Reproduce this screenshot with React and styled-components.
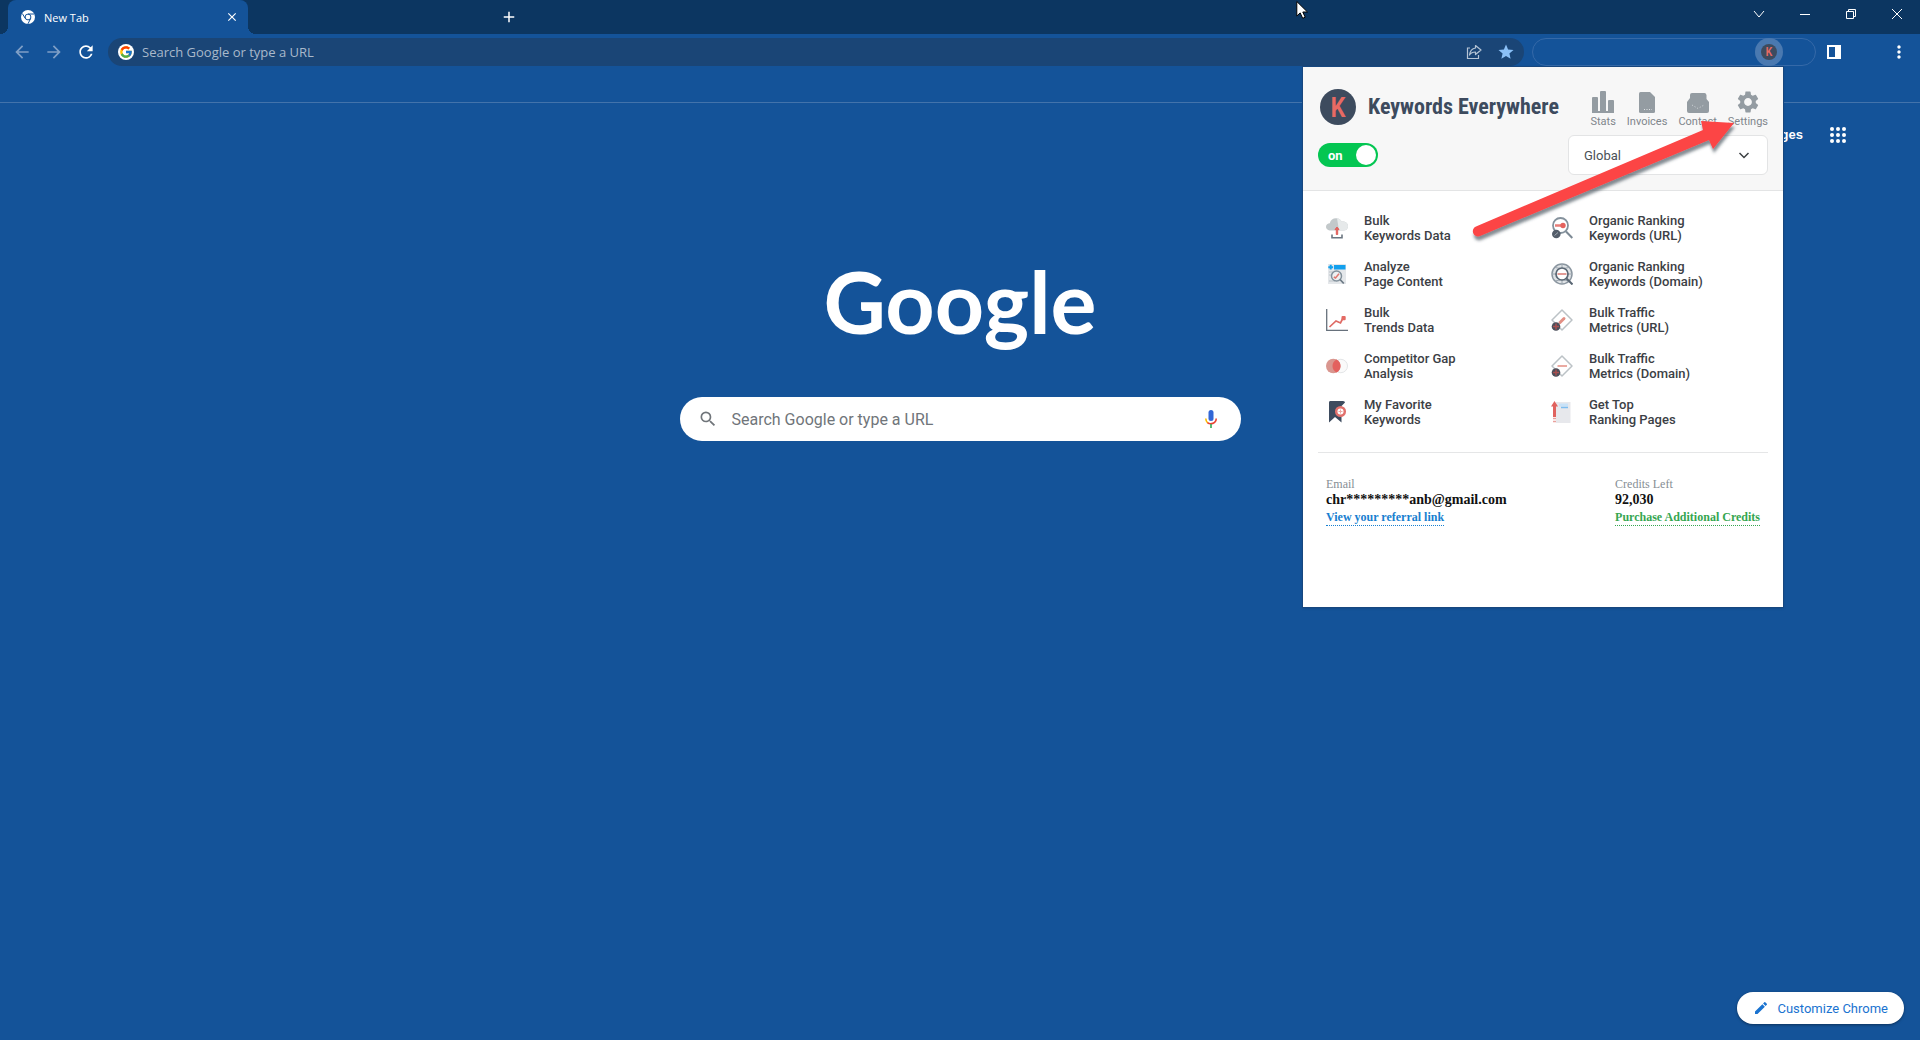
import styled, { createGlobalStyle, css } from "styled-components";
import { FcGoogle } from "react-icons/fc";
import {
  MdAdd,
  MdArrowBack,
  MdArrowForward,
  MdClose,
  MdEdit,
  MdMoreVert,
  MdRefresh,
  MdSearch,
  MdSettings,
  MdStar,
} from "react-icons/md";

const GlobalStyle = createGlobalStyle`
  * { box-sizing: border-box; }
  body {
    margin: 0;
    background: #145399;
    font-family: Roboto, "Liberation Sans", sans-serif;
  }
  button, input, select { font-family: inherit; }
`;

const uiFont = `"Open Sans", "Noto Sans", sans-serif`;

const Page = styled.div`
  position: relative;
  display: flex;
  flex-direction: column;
  min-height: 100vh;
  overflow: hidden;
  background: #145399;
`;

/* ---------- Browser frame ---------- */

const TabStrip = styled.header`
  display: flex;
  height: 34px;
  padding-left: 8px;
  background: #0c3661;
  color: #fff;
`;

const Tab = styled.div`
  position: relative;
  display: flex;
  align-items: center;
  gap: 9px;
  width: 240px;
  height: 34px;
  padding: 0 9px 0 13px;
  border-radius: 8px 8px 0 0;
  background: #145399;
  font-family: ${uiFont};
  font-size: 11px;

  &::before,
  &::after {
    content: "";
    position: absolute;
    bottom: 0;
    width: 8px;
    height: 8px;
  }
  &::before {
    left: -8px;
    background: radial-gradient(circle at 0 0, transparent 8px, #145399 8px);
  }
  &::after {
    right: -8px;
    background: radial-gradient(circle at 100% 0, transparent 8px, #145399 8px);
  }
`;

const TabTitle = styled.span`
  flex: 1;
`;

const IconButton = styled.button`
  display: inline-flex;
  align-items: center;
  justify-content: center;
  flex: none;
  width: ${({ $width }) => $width || 32}px;
  height: 28px;
  padding: 0;
  border: 0;
  background: transparent;
  color: ${({ $dim }) => ($dim ? "#7f9fc6" : "#fff")};
`;

const NewTabSlot = styled.div`
  display: flex;
  align-items: center;
  flex: 1;
  padding-left: 245px;
`;

const WindowControls = styled.div`
  display: flex;
  align-items: flex-start;
`;

const Toolbar = styled.div`
  display: flex;
  align-items: center;
  height: 34px;
  padding: 2px 5px 0 6px;
`;

const Omnibox = styled.label`
  display: flex;
  align-items: center;
  flex: 1;
  height: 28px;
  margin-left: 6px;
  padding: 0 2px 0 10px;
  border-radius: 14px;
  background: #1a4576;
`;

const GoogleBadge = styled.span`
  display: flex;
  align-items: center;
  justify-content: center;
  width: 16px;
  height: 16px;
  border-radius: 50%;
  background: #fff;
`;

const OmniboxInput = styled.input`
  flex: 1;
  min-width: 0;
  height: 24px;
  padding: 0 8px;
  border: 0;
  outline: 0;
  background: transparent;
  color: #fff;
  font-family: ${uiFont};
  font-size: 13px;

  &::placeholder {
    color: #a9b9cb;
    opacity: 1;
  }
`;

const ExtensionPill = styled.div`
  display: flex;
  align-items: center;
  justify-content: flex-end;
  width: 284px;
  height: 28px;
  margin: 0 2px 0 8px;
  padding-right: 32px;
  border: 1px solid #3569a8;
  border-radius: 14px;
`;

const ExtensionButton = styled.button`
  display: flex;
  align-items: center;
  justify-content: center;
  width: 28px;
  height: 28px;
  padding: 0;
  border: 0;
  border-radius: 50%;
  background: #4a79b0;
`;

const ToolbarEnd = styled.div`
  display: flex;
  gap: 33px;
`;

const BookmarkBar = styled.div`
  height: 35px;
  border-bottom: 1px solid #4373ab;
`;

/* ---------- New tab page ---------- */

const TopLinks = styled.nav`
  display: flex;
  align-items: center;
  justify-content: flex-end;
  gap: 23px;
  height: 64px;
  padding-right: 70px;
`;

const TopLink = styled.a`
  color: #fff;
  font: bold 13px/16px "Liberation Sans", Arial, sans-serif;
  text-decoration: none;
`;

const Center = styled.main`
  display: flex;
  flex: 1;
  flex-direction: column;
  align-items: center;
  padding: 80px 24px 0;
`;

const GoogleWordmark = styled.h1`
  margin: 0;
  color: #fff;
  font: 700 86px/108px Lato, sans-serif;
`;

const SearchBox = styled.label`
  display: flex;
  align-items: center;
  width: 100%;
  max-width: 561px;
  height: 44px;
  margin-top: 42px;
  padding: 0 20px 0 18px;
  border-radius: 22px;
  background: #fff;
  color: #70757a;
`;

const SearchInput = styled.input`
  flex: 1;
  min-width: 0;
  height: 40px;
  padding: 0 14px;
  border: 0;
  outline: 0;
  background: transparent;
  color: #202124;
  font-size: 16px;

  &::placeholder {
    color: #70757a;
    opacity: 1;
  }
`;

const PageFooter = styled.footer`
  display: flex;
  justify-content: flex-end;
  padding: 16px;
`;

const CustomizeButton = styled.button`
  display: flex;
  align-items: center;
  gap: 8px;
  height: 32px;
  padding: 0 16px;
  border: 0;
  border-radius: 16px;
  background: #fff;
  box-shadow: 0 1px 3px rgba(0, 0, 0, 0.4);
  color: #1a73d0;
  font-size: 13px;
`;

/* ---------- Extension popup ---------- */

const Popup = styled.section`
  position: absolute;
  top: 67px;
  right: 137px;
  width: 480px;
  min-height: 540px;
  background: #fff;
  box-shadow: 0 0 0 1px #17477f, 0 1px 3px rgba(0, 0, 0, 0.2);
`;

const PopupHeader = styled.header`
  padding: 16px 15px 11px;
  border-bottom: 1px solid #e3e4e5;
  background: #f7f7f7;
`;

const HeaderRow = styled.div`
  display: flex;
  align-items: center;
  justify-content: space-between;
  height: 48px;
`;

const Brand = styled.div`
  display: flex;
  align-items: center;
  gap: 12px;
  padding-left: 2px;
  color: #3d4b5e;
  font: bold 22px/32px "Liberation Sans Narrow", "Roboto Condensed", Roboto, sans-serif;
`;

const Shortcuts = styled.nav`
  display: flex;
  gap: 11px;
  padding-top: 6px;
`;

const Shortcut = styled.a`
  display: flex;
  flex-direction: column;
  align-items: center;
  gap: 1px;
  color: #7f868c;
  font-size: 11px;
  line-height: 16px;
  text-decoration: none;
`;

const ShortcutIcon = styled.span`
  display: flex;
  align-items: center;
  height: 22px;
  color: #949ca2;
`;

const Toggle = styled.label`
  display: flex;
  align-items: center;
  justify-content: space-between;
  width: 60px;
  height: 24px;
  padding: 0 2px 0 10px;
  border-radius: 12px;
  background: #04c652;
  color: #fff;
  font-size: 13px;
  font-weight: 700;
`;

const ToggleInput = styled.input`
  appearance: none;
  width: 20px;
  height: 20px;
  margin: 0;
  border-radius: 50%;
  background: #fff;
`;

const SelectWrap = styled.div`
  display: flex;
  align-items: center;
  width: 200px;
  height: 40px;
  padding-right: 17px;
  border: 1px solid #e3e4e5;
  border-radius: 6px;
  background: #fff;
  color: #3c4043;
`;

const RegionSelect = styled.select`
  appearance: none;
  flex: 1;
  height: 38px;
  padding: 0 15px;
  border: 0;
  outline: 0;
  background: transparent;
  color: #4a5056;
  font-size: 13px;
`;

const ToolGrid = styled.div`
  display: grid;
  grid-template-columns: 1fr 1fr;
  grid-auto-flow: column;
  grid-template-rows: repeat(5, 30px);
  row-gap: 16px;
  padding: 22px 7px 25px 23px;
`;

const ToolLink = styled.a`
  display: flex;
  align-items: center;
  gap: 16px;
  color: #3c4045;
  font-size: 13px;
  font-weight: 500;
  line-height: 15px;
  text-decoration: none;
  white-space: pre-line;
`;

const Account = styled.div`
  display: flex;
  justify-content: space-between;
  margin: 0 15px;
  padding: 23px 8px 0;
  border-top: 1px solid #e5e6e7;
  font-family: "Liberation Serif", "Times New Roman", serif;
`;

const AccountItem = styled.div`
  display: flex;
  flex-direction: column;
  align-items: flex-start;
`;

const AccountLabel = styled.span`
  color: #868e94;
  font-size: 12px;
  line-height: 16px;
`;

const AccountValue = styled.strong`
  color: #111;
  font-size: 14px;
  line-height: 16px;
`;

const AccountLink = styled.a`
  margin-top: 2px;
  border-bottom: 1px dotted currentColor;
  font-size: 12px;
  font-weight: 700;
  line-height: 15px;
  text-decoration: none;
  ${({ $tone }) =>
    $tone === "green"
      ? css`
          color: #36a651;
        `
      : css`
          color: #1880d0;
        `}
`;

/* ---------- Overlays ---------- */

const Overlay = styled.svg`
  position: absolute;
  top: ${({ $top }) => $top}px;
  right: ${({ $right }) => $right}px;
  pointer-events: none;
`;

/* ---------- Drawings ---------- */

const KLogo = ({ size }) => (
  <svg width={size} height={size} viewBox="0 0 36 36" aria-hidden="true">
    <circle cx="18" cy="18" r="18" fill="#3d4b5e" />
    <text
      x="18"
      y="28"
      textAnchor="middle"
      fill="#e86a63"
      fontFamily="Liberation Sans Narrow, Roboto Condensed, Roboto, sans-serif"
      fontSize="28"
      fontWeight="500"
    >
      K
    </text>
  </svg>
);

const ChromeIcon = () => (
  <svg width="14" height="14" viewBox="0 0 14 14" aria-hidden="true">
    <circle cx="7" cy="7" r="7" fill="#fff" />
    <circle cx="7" cy="7" r="2.900" fill="none" stroke="#145399" strokeWidth="1" />
    <path
      d="M7 4H13.200M4.300 8.500 1.300 3.500M9.700 8.500 6.900 13.900"
      stroke="#145399"
      strokeWidth="1"
    />
  </svg>
);

const Stroke = ({ size = 14, width = 1, children }) => (
  <svg
    width={size}
    height={size}
    viewBox={`0 0 ${size} ${size}`}
    fill="none"
    stroke="currentColor"
    strokeWidth={width}
    aria-hidden="true"
  >
    {children}
  </svg>
);

const ShareIcon = () => (
  <Stroke size={16}>
    <path d="M4 4H1.500V14.500H12.500V11" stroke="#b5c4d5" strokeWidth="1.200" />
    <path
      d="M9.500 1.500 15 6 9.500 10.500V8C7 8 5 8.600 3.500 11 4 7 6 4.500 9.500 4Z"
      stroke="#b5c4d5"
      strokeWidth="1.200"
      strokeLinejoin="round"
    />
  </Stroke>
);

const SidePanelIcon = () => (
  <svg width="14" height="14" viewBox="0 0 14 14" aria-hidden="true">
    <path fill="#fff" fillRule="evenodd" d="M0 0H14V14H0ZM2 2V12H8V2Z" />
  </svg>
);

const AppsIcon = () => (
  <svg width="16" height="16" viewBox="0 0 16 16" fill="#fff" aria-hidden="true">
    {[2, 8, 14].map((cy) =>
      [2, 8, 14].map((cx) => <circle key={`${cx}-${cy}`} cx={cx} cy={cy} r="2" />)
    )}
  </svg>
);

const MicIcon = () => (
  <svg width="20" height="20" viewBox="0 0 20 20" fill="none" aria-hidden="true">
    <rect x="7.500" y="1" width="5" height="11" rx="2.500" fill="#3367d6" />
    <path d="M4.800 9.500C4.800 11.500 5.500 13 6.800 14" stroke="#fbbc04" strokeWidth="1.600" />
    <path d="M6.500 13.700C9 15.600 15.200 15 15.200 9.500" stroke="#ea4335" strokeWidth="1.600" />
    <path d="M10 15V19" stroke="#34a853" strokeWidth="1.600" />
  </svg>
);

const shortcutIcons = {
  stats: (
    <svg width="22" height="22" viewBox="0 0 22 22" fill="currentColor" aria-hidden="true">
      <rect x="0" y="6" width="6" height="15" rx="1" />
      <rect x="8" y="0" width="6" height="21" rx="1" />
      <rect x="16" y="9" width="6" height="12" rx="1" />
      <rect y="20" width="22" height="2" />
    </svg>
  ),
  invoices: (
    <svg width="22" height="22" viewBox="0 0 22 22" fill="currentColor" aria-hidden="true">
      <path d="M4.500 1H14L19 6V20.500Q19 22 17.500 22H4.500Q3 22 3 20.500V2.500Q3 1 4.500 1Z" />
      <path d="M8 18.500H16" stroke="#dfe2e4" strokeDasharray="1 1.500" />
    </svg>
  ),
  contact: (
    <svg width="22" height="22" viewBox="0 0 22 22" fill="currentColor" aria-hidden="true">
      <path d="M5 2H17.500Q19 2 19.500 4V8L22 11V20Q22 22 20 22H2Q0 22 0 20V11L3 7V4Q3 2 5 2Z" />
      <path d="M5 14 11 17.500 17 14" fill="none" stroke="#d5d9dc" strokeDasharray="1 2" />
    </svg>
  ),
  settings: <MdSettings size={26} />,
};

const Globe = ({ cx, cy }) => (
  <g>
    <circle cx={cx} cy={cy} r="4.300" fill="#4b4f5a" />
    <path
      d={`M${cx - 3} ${cy}h6M${cx} ${cy - 3}v6`}
      stroke="#a94f4f"
      strokeWidth="1.500"
      fill="none"
    />
  </g>
);

const toolIcons = {
  cloud: (
    <>
      <path
        d="M5 13.500C1.500 13.500 0 11.500 0 9.700 0 7.500 1.800 6.200 3.800 6.200 4.500 3 7 1.200 10 1.200 13 1.200 14.800 2.800 15.600 4.600 19.500 4.300 22 6.300 22 9.200 22 12 20 13.500 17.500 13.500Z"
        fill="#c2c8ca"
      />
      <path
        d="M11 1.300C13 1.500 14.800 2.800 15.600 4.600 19.500 4.300 22 6.300 22 9.200 22 12 20 13.500 17.500 13.500H13Z"
        fill="#e6e9ea"
      />
      <path d="M11 10 13 12.500H11.700V17.500H10.300V12.500H9Z" fill="#e2605c" stroke="#e2605c" />
      <path d="M6 17.500V20.700H16V17.500" fill="none" stroke="#6b7681" strokeWidth="1.600" />
    </>
  ),
  analyze: (
    <>
      <rect x="2" y="1" width="18" height="20" fill="#e4e7ea" />
      <rect x="8" y="2" width="11.500" height="4.500" fill="#12a0ee" />
      <path d="M4.700 1.800V6.600M2.300 4.200H7.100" stroke="#12a0ee" strokeWidth="2" />
      <path d="M3 9H7M3 12H5M3 18H9" stroke="#bcc3c9" />
      <circle cx="10.500" cy="13" r="5" fill="#eef0f2" stroke="#82909b" strokeWidth="1.500" />
      <path d="M7.800 14 9.500 15 13 10.800" fill="none" stroke="#e0786f" strokeWidth="1.500" />
      <path d="M14 16.500 17.800 20.500" stroke="#6c7985" strokeWidth="1.800" />
    </>
  ),
  trends: (
    <>
      <path d="M.700 0V21.300H22" fill="none" stroke="#67717c" strokeWidth="1.300" />
      <path d="M3.500 18 10 12 14.500 14 17 9" fill="none" stroke="#df6a64" strokeWidth="1.700" />
      <rect x="15.500" y="7" width="4.200" height="4.200" rx="1" fill="#e46a64" />
    </>
  ),
  gap: (
    <>
      <circle cx="14.800" cy="11" r="6.700" fill="#fafafa" stroke="#e3e5e7" />
      <circle cx="7.300" cy="11" r="7.300" fill="#d9968f" />
      <path d="M10.500 4.500A7.300 7.300 0 0 1 10.500 17.500 7.300 7.300 0 0 1 10.500 4.500Z" fill="#e3615e" />
    </>
  ),
  favorite: (
    <>
      <path d="M4 0H17Q19 0 19 1.500L15.500 5V21.500L9 16 3 21.500V1.500Q3 0 4 0Z" fill="#3d4b5e" />
      <circle cx="14.500" cy="10.500" r="4.300" fill="#fff" stroke="#e2716d" strokeWidth="2.500" />
      <path d="M14.500 8.500V12.500M12.500 10.500H16.500" stroke="#edaaa6" strokeWidth="1" />
    </>
  ),
  organicUrl: (
    <>
      <circle cx="9.500" cy="8.500" r="7.500" fill="#fff" stroke="#84919c" strokeWidth="1.800" />
      <path d="M4 8.500H11" stroke="#e77d78" strokeWidth="2.500" />
      <circle cx="12" cy="8.500" r="2.700" fill="#e4625d" />
      <path d="M15 14.500 21.300 21" stroke="#7c8994" strokeWidth="2" />
      <circle cx="5.300" cy="17" r="4.300" fill="#535d69" />
      <path d="M3.500 18.500 7 15.500" stroke="#a1a9b1" />
    </>
  ),
  organicDomain: (
    <>
      <circle cx="11" cy="11" r="10" fill="#dfe3e6" stroke="#8b96a0" strokeWidth="1.500" />
      <path
        d="M1 11H21M11 1V21M4 4.500Q11 7 18 4.500M4 18Q11 15 18 18"
        fill="none"
        stroke="#9aa4ad"
      />
      <circle cx="11" cy="11" r="6" fill="#fff" stroke="#596673" strokeWidth="1.700" />
      <path d="M6.500 11H15.500" stroke="#e29b96" strokeWidth="2" />
      <path d="M15.500 15.500 21.500 21.500" stroke="#596673" strokeWidth="2" />
    </>
  ),
  trafficUrl: (
    <>
      <path
        d="M11 1 21 11 11 21 1 11Z"
        fill="#fff"
        stroke="#bcc2c6"
        strokeWidth="1.500"
        strokeLinejoin="round"
      />
      <path d="M9 13.500 13 9.500" stroke="#e28f84" strokeWidth="3" strokeLinecap="round" />
      <Globe cx={5} cy={17.5} />
    </>
  ),
  trafficDomain: (
    <>
      <path
        d="M11 1 21 11 11 21 1 11Z"
        fill="#fff"
        stroke="#bcc2c6"
        strokeWidth="1.500"
        strokeLinejoin="round"
      />
      <path d="M6.500 11H16" stroke="#e8a198" strokeWidth="1.800" />
      <Globe cx={5} cy={17.5} />
    </>
  ),
  topPages: (
    <>
      <rect x="5" y="1" width="14.500" height="21" fill="#e7e8ec" />
      <path d="M8 4H17" stroke="#c8e2f8" strokeWidth="3" />
      <path d="M10 6.500H17" stroke="#7cbdf0" strokeWidth="1.500" />
      <path d="M3.500 0 7 5.500H5V16H2V5.500H0Z" fill="#e0625e" />
      <path d="M2 17.500H5M2 20.500H5" stroke="#e9a19d" strokeWidth="1.500" />
    </>
  ),
};

const tools = [
  { icon: "cloud", label: "Bulk\nKeywords Data" },
  { icon: "analyze", label: "Analyze\nPage Content" },
  { icon: "trends", label: "Bulk\nTrends Data" },
  { icon: "gap", label: "Competitor Gap\nAnalysis" },
  { icon: "favorite", label: "My Favorite\nKeywords" },
  { icon: "organicUrl", label: "Organic Ranking\nKeywords (URL)" },
  { icon: "organicDomain", label: "Organic Ranking\nKeywords (Domain)" },
  { icon: "trafficUrl", label: "Bulk Traffic\nMetrics (URL)" },
  { icon: "trafficDomain", label: "Bulk Traffic\nMetrics (Domain)" },
  { icon: "topPages", label: "Get Top\nRanking Pages" },
];

const shortcuts = [
  { id: "stats", label: "Stats" },
  { id: "invoices", label: "Invoices" },
  { id: "contact", label: "Contact" },
  { id: "settings", label: "Settings" },
];

const BrowserFrame = () => (
  <>
    <TabStrip>
      <Tab>
        <ChromeIcon />
        <TabTitle>New Tab</TabTitle>
        <IconButton $width={14} aria-label="Close tab">
          <MdClose size={14} />
        </IconButton>
      </Tab>
      <NewTabSlot>
        <IconButton aria-label="New tab">
          <MdAdd size={18} />
        </IconButton>
      </NewTabSlot>
      <WindowControls>
        <IconButton $width={46} aria-label="Search tabs">
          <Stroke>
            <path d="M2 4 7 10 12 4" />
          </Stroke>
        </IconButton>
        <IconButton $width={46} aria-label="Minimize">
          <Stroke>
            <path d="M2 7.500H12" />
          </Stroke>
        </IconButton>
        <IconButton $width={46} aria-label="Restore">
          <Stroke>
            <path d="M2.500 4.500H9.500V11.500H2.500ZM4.500 4.500V2.500H11.500V9.500H9.500" />
          </Stroke>
        </IconButton>
        <IconButton $width={46} aria-label="Close">
          <Stroke>
            <path d="M2 2 12 12M12 2 2 12" />
          </Stroke>
        </IconButton>
      </WindowControls>
    </TabStrip>
    <Toolbar>
      <IconButton $dim aria-label="Back">
        <MdArrowBack size={20} />
      </IconButton>
      <IconButton $dim aria-label="Forward">
        <MdArrowForward size={20} />
      </IconButton>
      <IconButton aria-label="Reload">
        <MdRefresh size={20} />
      </IconButton>
      <Omnibox>
        <GoogleBadge>
          <FcGoogle size={14} />
        </GoogleBadge>
        <OmniboxInput aria-label="Address bar" placeholder="Search Google or type a URL" />
        <IconButton aria-label="Share">
          <ShareIcon />
        </IconButton>
        <IconButton aria-label="Bookmark">
          <MdStar size={18} color="#8ac0f7" />
        </IconButton>
      </Omnibox>
      <ExtensionPill>
        <ExtensionButton aria-label="Keywords Everywhere">
          <KLogo size={16} />
        </ExtensionButton>
      </ExtensionPill>
      <ToolbarEnd>
        <IconButton aria-label="Side panel">
          <SidePanelIcon />
        </IconButton>
        <IconButton aria-label="Menu">
          <MdMoreVert size={20} />
        </IconButton>
      </ToolbarEnd>
    </Toolbar>
    <BookmarkBar />
  </>
);

const KeywordsPopup = () => (
  <Popup>
    <PopupHeader>
      <HeaderRow>
        <Brand>
          <KLogo size={36} />
          Keywords Everywhere
        </Brand>
        <Shortcuts>
          {shortcuts.map(({ id, label }) => (
            <Shortcut key={id} href="#">
              <ShortcutIcon>{shortcutIcons[id]}</ShortcutIcon>
              {label}
            </Shortcut>
          ))}
        </Shortcuts>
      </HeaderRow>
      <HeaderRow>
        <Toggle>
          on
          <ToggleInput type="checkbox" defaultChecked />
        </Toggle>
        <SelectWrap>
          <RegionSelect aria-label="Region" defaultValue="Global">
            <option>Global</option>
          </RegionSelect>
          <Stroke size={12} width={1.5}>
            <path d="M1.500 4 6 8.500 10.500 4" />
          </Stroke>
        </SelectWrap>
      </HeaderRow>
    </PopupHeader>
    <ToolGrid>
      {tools.map(({ icon, label }) => (
        <ToolLink key={label} href="#">
          <svg width="22" height="22" viewBox="0 0 22 22" aria-hidden="true">
            {toolIcons[icon]}
          </svg>
          {label}
        </ToolLink>
      ))}
    </ToolGrid>
    <Account>
      <AccountItem>
        <AccountLabel>Email</AccountLabel>
        <AccountValue>chr*********anb@gmail.com</AccountValue>
        <AccountLink href="#">View your referral link</AccountLink>
      </AccountItem>
      <AccountItem>
        <AccountLabel>Credits Left</AccountLabel>
        <AccountValue>92,030</AccountValue>
        <AccountLink $tone="green" href="#">
          Purchase Additional Credits
        </AccountLink>
      </AccountItem>
    </Account>
  </Popup>
);

const App = () => (
  <Page>
    <GlobalStyle />
    <BrowserFrame />
    <TopLinks>
      <TopLink href="#">Images</TopLink>
      <IconButton $width={24} aria-label="Google apps">
        <AppsIcon />
      </IconButton>
    </TopLinks>
    <Center>
      <GoogleWordmark>Google</GoogleWordmark>
      <SearchBox>
        <MdSearch size={20} />
        <SearchInput aria-label="Search" placeholder="Search Google or type a URL" />
        <MicIcon />
      </SearchBox>
    </Center>
    <PageFooter>
      <CustomizeButton>
        <MdEdit size={16} />
        Customize Chrome
      </CustomizeButton>
    </PageFooter>
    <KeywordsPopup />
    {/* pointer arrow towards Settings */}
    <Overlay $top={110} $right={180} width="280" height="140" viewBox="1460 110 280 140">
      <defs>
        <filter id="arrowShadow" x="-10%" y="-10%" width="120%" height="130%">
          <feDropShadow dx="1" dy="4" stdDeviation="1.500" floodColor="#34424c" floodOpacity="0.6" />
        </filter>
      </defs>
      <path
        d="M1476 226.500 1703 130 1701 121 1734 123 1713 149 1709 140 1480 236A5 5 0 0 1 1476 226.500Z"
        fill="#fc4445"
        filter="url(#arrowShadow)"
      />
    </Overlay>
    {/* mouse cursor */}
    <Overlay $top={0} $right={611} width="13" height="20" viewBox="0 0 13 20">
      <path
        d="M.800 1.500V16L4.200 12.900 6.700 18.300 9.200 17.200 6.800 12H11.500Z"
        fill="#fff"
        stroke="#000"
      />
    </Overlay>
  </Page>
);

export default App;
